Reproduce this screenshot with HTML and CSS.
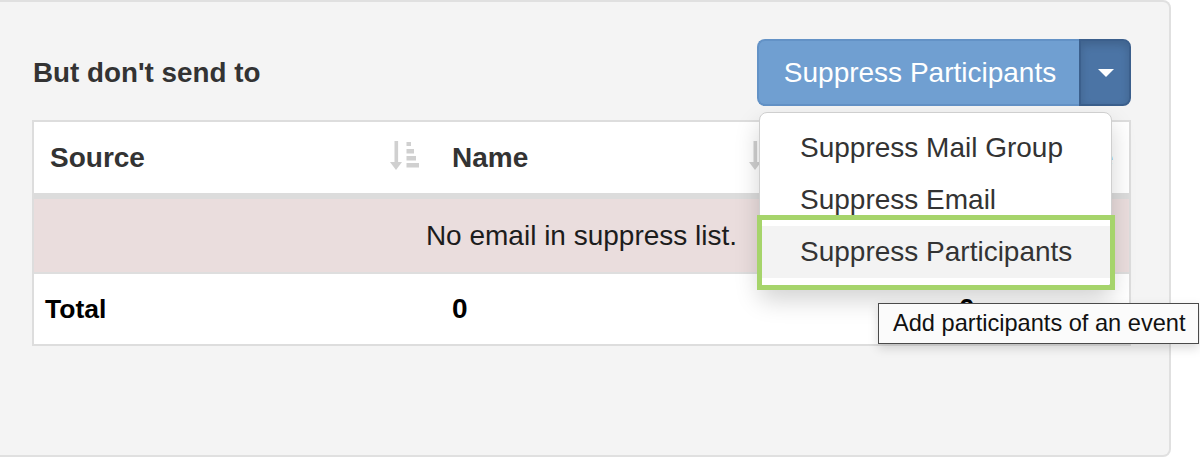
FILE: index.html
```html
<!DOCTYPE html>
<html>
<head>
<meta charset="utf-8">
<link rel="stylesheet" href="styles.css">
</head>
<body>
<div class="panel">
  <div class="toolbar">
    <h4 class="title">But don't send to</h4>
    <div class="btn-group">
      <button class="btn-main">Suppress Participants</button>
      <button class="btn-caret"><span class="caret"></span></button>
      <ul class="menu">
        <li class="item">Suppress Mail Group</li>
        <li class="item">Suppress Email</li>
        <li class="item hover">Suppress Participants</li>
      </ul>
      <div class="highlight"></div>
    </div>
  </div>
  <table class="grid">
    <colgroup><col class="c1"><col class="c2"><col class="c3"></colgroup>
    <thead>
      <tr>
        <th>Source<svg class="sort" viewBox="0 0 30 30"><rect x="4.5" y="0" width="3.6" height="22"/><polygon points="0,21 12,21 6,29"/><rect x="16.5" y="1" width="4.5" height="4"/><rect x="16.5" y="8" width="7.5" height="4.5"/><rect x="16.5" y="15" width="9.5" height="4.5"/><rect x="16.5" y="22" width="12.5" height="4.5"/></svg></th>
        <th>Name<svg class="sort" viewBox="0 0 30 30"><rect x="4.5" y="0" width="3.6" height="22"/><polygon points="0,21 12,21 6,29"/><rect x="16.5" y="1" width="4.5" height="4"/><rect x="16.5" y="8" width="7.5" height="4.5"/><rect x="16.5" y="15" width="9.5" height="4.5"/><rect x="16.5" y="22" width="12.5" height="4.5"/></svg></th>
        <th class="right">Type</th>
      </tr>
    </thead>
    <tbody>
      <tr class="empty"><td colspan="3">No email in suppress list.</td></tr>
    </tbody>
    <tfoot>
      <tr class="total">
        <td class="label">Total</td>
        <td>0</td>
        <td class="count">0</td>
      </tr>
    </tfoot>
  </table>
</div>
<div class="tooltip">Add participants of an event</div>
</body>
</html>
```

FILE: styles.css
```css
html, body {
  margin: 0;
  padding: 0;
  background: #ffffff;
}
body {
  position: relative;
  width: 1200px;
  height: 460px;
  overflow: hidden;
  font-family: "Liberation Sans", Arial, sans-serif;
  color: #333;
}
.panel {
  box-sizing: border-box;
  width: 1171px;
  height: 457px;
  background: #f4f4f4;
  border: 2px solid #e0e0e0;
  border-left: none;
  border-radius: 0 8px 8px 0;
  padding: 37px 38px 0 32px;
}
.toolbar {
  display: flex;
  justify-content: space-between;
  align-items: center;
  height: 67px;
  margin-bottom: 14px;
}
.title {
  margin: 0 0 0 1px;
  font-size: 27.8px;
  font-weight: bold;
  color: #333;
}
.btn-group {
  position: relative;
  display: flex;
  height: 67px;
}
.btn-main {
  box-sizing: border-box;
  height: 67px;
  width: 322px;
  margin: 0;
  padding: 0 0 0 2px;
  font-family: "Liberation Sans", Arial, sans-serif;
  font-size: 28px;
  color: #ffffff;
  background: #709fd1;
  border: 2px solid #6392c6;
  border-right: none;
  border-radius: 8px 0 0 8px;
}
.btn-caret {
  box-sizing: border-box;
  width: 52px;
  height: 67px;
  margin: 0;
  padding: 0;
  display: flex;
  align-items: center;
  justify-content: center;
  background: #4b74a5;
  border: 2px solid #3b5f8c;
  border-radius: 0 8px 8px 0;
  box-shadow: inset 0 4px 8px rgba(0, 0, 0, 0.15);
}
.caret {
  display: block;
  width: 0;
  height: 0;
  border-left: 8px solid transparent;
  border-right: 8px solid transparent;
  border-top: 8px solid #ffffff;
  margin-left: 2px;
}
.menu {
  position: absolute;
  top: 73px;
  left: 2px;
  box-sizing: border-box;
  width: 353px;
  margin: 0;
  padding: 9px 0;
  list-style: none;
  background: #ffffff;
  border: 1px solid #cfcfcf;
  border-radius: 8px;
  box-shadow: 0 12px 24px rgba(0, 0, 0, 0.175);
  z-index: 5;
}
.item {
  padding: 6px 40px;
  line-height: 40px;
  font-size: 28px;
  color: #333;
  white-space: nowrap;
}
.item.hover {
  background: #f3f3f3;
}
.highlight {
  position: absolute;
  top: 176px;
  left: 0;
  box-sizing: border-box;
  width: 358px;
  height: 75px;
  border: 5px solid #a6d46b;
  z-index: 6;
}
.grid {
  width: 1099px;
  table-layout: fixed;
  border-collapse: separate;
  border-spacing: 0;
  border: 2px solid #dddddd;
  background: #ffffff;
  font-size: 28px;
}
.c1 { width: 402px; }
.c2 { width: 359px; }
.grid th {
  position: relative;
  text-align: left;
  font-weight: bold;
  color: #333;
  padding: 16px 16px 15px 16px;
  line-height: 40px;
  border-bottom: 6px solid #dcdcdc;
  white-space: nowrap;
}
.grid th.right {
  text-align: right;
}
.sort {
  position: absolute;
  right: 16px;
  top: 19px;
  width: 30px;
  height: 30px;
  fill: #d0d0d0;
}
.empty td {
  background: #eadddd;
  color: #1c1c1c;
  text-align: center;
  padding: 16px;
  line-height: 41px;
  border-bottom: 2px solid #dedede;
}
.total td {
  padding: 15px 16px;
  line-height: 40px;
  font-weight: bold;
  color: #000;
}
.total td.label {
  padding-left: 11px;
  font-size: 26.5px;
}
.total td.count {
  padding-left: 164px;
}
.tooltip {
  position: absolute;
  top: 303px;
  left: 878px;
  box-sizing: border-box;
  width: 321px;
  height: 41px;
  padding: 0 0 0 14px;
  line-height: 39px;
  font-size: 23.6px;
  color: #111;
  background: #fbfbfb;
  border: 1px solid #4a4a4a;
  box-shadow: 0 4px 10px rgba(0, 0, 0, 0.15);
  white-space: nowrap;
  z-index: 10;
}
```
